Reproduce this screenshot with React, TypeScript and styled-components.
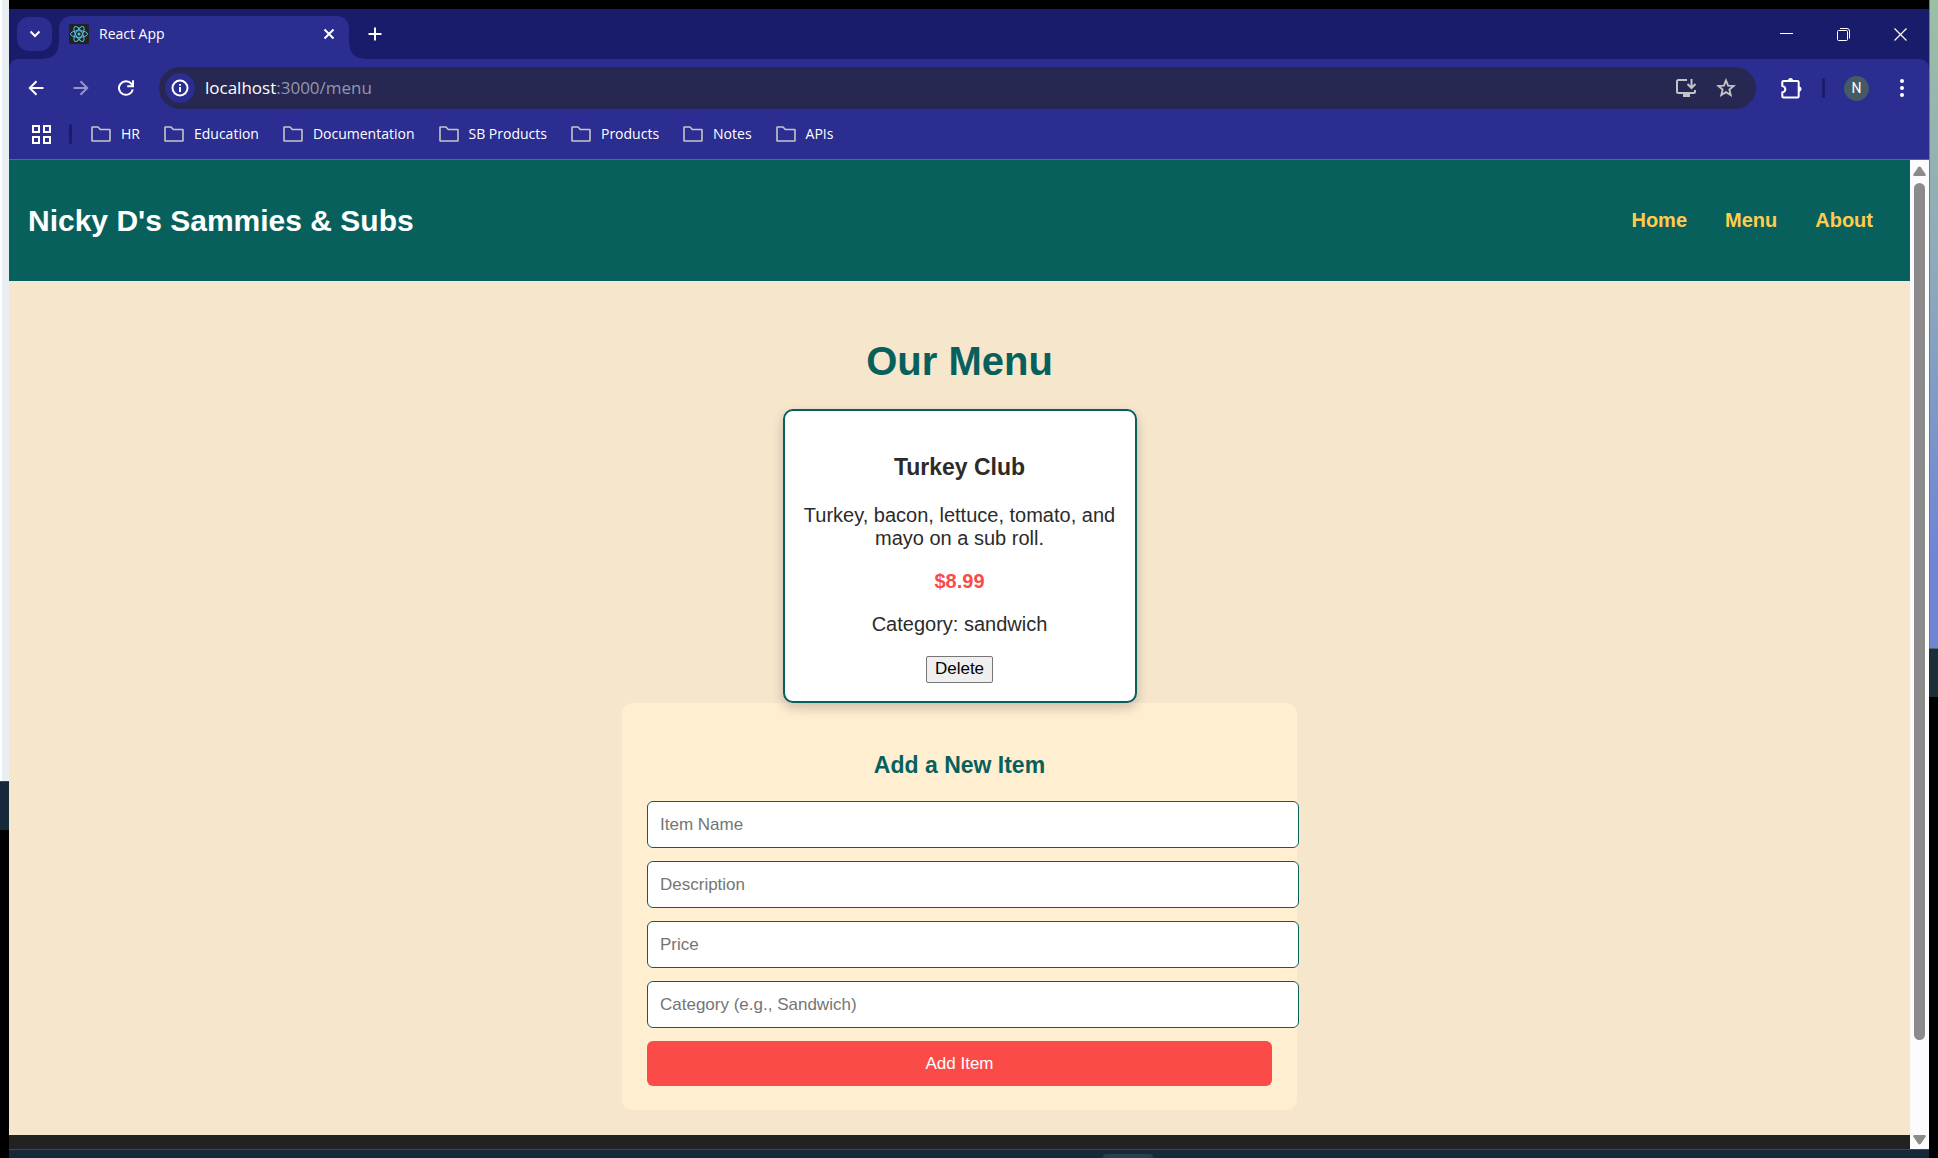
import React from "react";
import styled, { createGlobalStyle } from "styled-components";

const ui = `"Open Sans", "Noto Sans", sans-serif`;
const teal = "#08605d";
const frame = "#191b6b";
const bar = "#2b2d90";
const coral = "#fa4b48";

const GlobalStyle = createGlobalStyle`
  * { box-sizing: border-box; }
  body { margin: 0; background: #000; font-family: "Liberation Sans", Arial, sans-serif; font-size: 20px; line-height: 23px; color: #2b2b2b; }
  button, input { font-family: inherit; }
`;

const Desktop = styled.div`
  display: grid;
  grid-template-columns: 9px minmax(0, 1fr) 9px;
  min-height: 100vh;
`;

const Edge = styled.div`
  display: flex;
  flex-direction: column;
`;

const EdgeBlock = styled.div<{ $grow: number; $fill: string; $line?: string }>`
  flex: ${(p) => p.$grow} 1 0;
  background: ${(p) => p.$fill};
  border-top: ${(p) => (p.$line ? `1px solid ${p.$line}` : "none")};
`;

const Window = styled.div`
  display: flex;
  flex-direction: column;
  padding-top: 9px;
`;

const TabStrip = styled.div`
  display: flex;
  align-items: flex-start;
  height: 50px;
  padding: 8px 0 0 8px;
  background: ${frame};
`;

const PlainButton = styled.button`
  display: flex;
  align-items: center;
  justify-content: center;
  padding: 0;
  border: 0;
  background: none;
  color: #fff;
`;

const TabSearch = styled(PlainButton)`
  width: 35px;
  height: 34px;
  margin-right: 7px;
  border-radius: 12px;
  background: ${bar};
`;

const Tab = styled.div`
  position: relative;
  display: flex;
  align-items: center;
  width: 290px;
  height: 43px;
  margin-top: -1px;
  padding: 0 10px 7px;
  border-radius: 12px 12px 0 0;
  background: ${bar};
  color: #fff;
  font: 14px/20px ${ui};

  &::before,
  &::after {
    content: "";
    position: absolute;
    bottom: 0;
    width: 14px;
    height: 14px;
  }
  &::before {
    right: 100%;
    background: radial-gradient(circle at 0 0, transparent 13px, ${bar} 14px);
  }
  &::after {
    left: 100%;
    background: radial-gradient(circle at 100% 0, transparent 13px, ${bar} 14px);
  }
`;

const TabTitle = styled.span`
  flex: 1;
  padding-left: 10px;
`;

const TabClose = styled(PlainButton)`
  width: 20px;
  height: 34px;
`;

const NewTab = styled(PlainButton)`
  width: 34px;
  height: 34px;
  margin-left: 9px;
`;

const WindowControls = styled.div`
  display: flex;
  margin-left: auto;
`;

const WindowControl = styled(PlainButton)`
  width: 57px;
  height: 34px;
`;

const ToolbarBack = styled.div`
  background: ${frame};
`;

const Toolbar = styled.div`
  display: flex;
  align-items: center;
  height: 58px;
  padding: 0 5px 0 4px;
  border-radius: 9px 9px 0 0;
  background: ${bar};
`;

const ToolButton = styled(PlainButton)<{ $faded?: boolean }>`
  width: 45px;
  height: 42px;
  opacity: ${(p) => (p.$faded ? 0.5 : 1)};
`;

const AddressBar = styled.div`
  display: flex;
  flex: 1;
  align-items: center;
  height: 42px;
  margin: 0 12px 0 11px;
  padding: 0 10px 0 6px;
  border-radius: 21px;
  background: #262852;
  color: #9496ad;
  font: 17px/24px ${ui};
`;

const SiteInfo = styled(PlainButton)`
  width: 30px;
  height: 30px;
  margin-right: 10px;
  border-radius: 50%;
  background: ${bar};
`;

const Url = styled.div`
  flex: 1;
`;

const Host = styled.span`
  color: #fff;
`;

const AddressAction = styled(PlainButton)`
  width: 40px;
  height: 40px;
  color: #c4c4c6;
`;

const Divider = styled.div`
  width: 3px;
  height: 20px;
  border-radius: 2px;
  background: ${frame};
`;

const ToolDivider = styled(Divider)`
  margin: 0 9px;
`;

const Avatar = styled.span`
  width: 25px;
  height: 25px;
  border-radius: 50%;
  background: #455a64;
  text-align: center;
  font: 14px/25px Roboto, sans-serif;
`;

const Bookmarks = styled.nav`
  display: flex;
  align-items: center;
  gap: 24px;
  height: 43px;
  padding: 0 23px 8px;
  border-bottom: 1px solid #5a5cae;
  background: ${bar};
`;

const BookmarkLead = styled.div`
  display: flex;
  align-items: center;
  gap: 18px;
  margin-right: -5px;
`;

const Bookmark = styled.a`
  display: flex;
  align-items: center;
  gap: 10px;
  color: #fff;
  font: 14px/20px ${ui};
  text-decoration: none;

  svg {
    color: #c6c6c6;
  }
`;

const Viewport = styled.div`
  display: flex;
`;

const Site = styled.div`
  flex: 1;
  min-width: 0;
  background: #f5e6cc;
`;

const SiteHeader = styled.header`
  display: flex;
  align-items: center;
  justify-content: space-between;
  height: 121px;
  padding: 0 37px 0 19px;
  background: ${teal};
`;

const Brand = styled.h1`
  margin: 0;
  color: #fff;
  font-size: 30px;
  line-height: 35px;
`;

const SiteNav = styled.nav`
  display: flex;
  gap: 38px;
`;

const NavLink = styled.a`
  color: #ffcc4d;
  font-weight: 700;
  text-decoration: none;
`;

const Menu = styled.main`
  display: flex;
  flex-direction: column;
  align-items: center;
  padding: 57px 25px 25px;
  text-align: center;
`;

const PageTitle = styled.h2`
  margin: 0 0 25px;
  color: ${teal};
  font-size: 40px;
  line-height: 46px;
`;

const Card = styled.article`
  position: relative;
  width: 100%;
  max-width: 354px;
  padding: 43px 18px 18px;
  border: 2px solid ${teal};
  border-radius: 10px;
  background: #fff;
  box-shadow: 0 5px 12px rgba(0, 0, 0, 0.2);
`;

const CardTitle = styled.h3`
  margin: 0 0 23px;
  font-size: 23px;
  line-height: 27px;
`;

const CardText = styled.p`
  margin: 0 0 20px;
`;

const Price = styled(CardText)`
  color: ${coral};
  font-weight: 700;
`;

const DeleteButton = styled.button`
  display: block;
  height: 27px;
  margin: 0 auto;
  padding: 0 8px 2px;
  border: 1px solid #767676;
  border-radius: 2px;
  background: #efefef;
  color: #000;
  font-size: 17px;
  line-height: 20px;
`;

const ItemForm = styled.form`
  width: 100%;
  max-width: 675px;
  padding: 49px 25px 24px;
  border-radius: 10px;
  background: #ffeed0;
`;

const FormTitle = styled.h3`
  margin: 0 0 22px;
  color: ${teal};
  font-size: 23px;
  line-height: 27px;
`;

const Field = styled.input`
  box-sizing: content-box;
  display: block;
  width: 100%;
  height: 19px;
  margin: 0 0 13px;
  padding: 14px 13px 14px 12px;
  padding-block: 13px;
  border: 1px solid ${teal};
  border-radius: 6px;
  background: #fff;
  color: #2b2b2b;
  font-size: 17px;

  &::placeholder {
    color: #757575;
  }
`;

const SubmitButton = styled.button`
  display: block;
  width: 100%;
  height: 45px;
  padding: 0;
  border: 0;
  border-radius: 6px;
  background: ${coral};
  color: #fff;
  font-size: 17px;
`;

const SiteFooter = styled.footer`
  height: 14px;
  background: #222;
`;

const Scrollbar = styled.div`
  display: flex;
  flex-direction: column;
  align-items: center;
  width: 19px;
  padding: 6px 0 4px;
  background: #fcfcfc;
  color: #8b8b8b;
`;

const Thumb = styled.div`
  flex: 855 1 0;
  width: 11px;
  margin-top: 7px;
  border-radius: 6px;
  background: #8b8b8b;
`;

const ThumbRest = styled.div`
  flex: 95 1 0;
`;

const Taskbar = styled.div`
  display: flex;
  flex: 1;
  align-items: flex-end;
  min-height: 9px;
  border-top: 1px solid #3b4954;
  background: #15293b;
`;

const TaskbarApp = styled.div`
  width: 50px;
  height: 4px;
  margin-left: 57%;
  border-radius: 4px 4px 0 0;
  background: #2c3e4e;
`;

const Line = ({ size, children, width = 2 }: { size: number; children: React.ReactNode; width?: number }) => (
  <svg width={size} height={size} viewBox={`0 0 ${size} ${size}`} fill="none" stroke="currentColor" strokeWidth={width} aria-hidden="true">
    {children}
  </svg>
);

const ReactMark = () => (
  <svg width="20" height="20" viewBox="0 0 20 20" fill="none" stroke="#53c1de" strokeWidth="1" aria-hidden="true">
    <rect width="20" height="20" rx="2" fill="#222" stroke="none" />
    <ellipse cx="10" cy="10" rx="8.5" ry="3.3" />
    <ellipse cx="10" cy="10" rx="8.5" ry="3.3" transform="rotate(60 10 10)" />
    <ellipse cx="10" cy="10" rx="8.5" ry="3.3" transform="rotate(120 10 10)" />
    <circle cx="10" cy="10" r="1.5" fill="#53c1de" stroke="none" />
  </svg>
);

const Folder = () => (
  <svg width="20" height="16" viewBox="0 0 20 16" fill="none" stroke="currentColor" strokeWidth="1.6" strokeLinejoin="round" aria-hidden="true">
    <path d="M1 1.6Q1 1 1.6 1H7l2.3 2.5h9.1q.6 0 .6.6v10.3q0 .6-.6.6H1.6q-.6 0-.6-.6Z" />
  </svg>
);

const Arrow = ({ down }: { down?: boolean }) => (
  <svg width="13" height="10" viewBox="0 0 13 10" fill="currentColor" aria-hidden="true">
    <path d={down ? "M1 0h11q1 .2.8 1.4L7.8 8.8q-1.3 1.2-2.6 0L.2 1.4Q0 .2 1 0Z" : "M1 10h11q1-.2.8-1.4L7.8 1.2q-1.3-1.2-2.6 0L.2 8.6Q0 9.8 1 10Z"} />
  </svg>
);

const folders = ["HR", "Education", "Documentation", "SB Products", "Products", "Notes", "APIs"];
const pages = ["Home", "Menu", "About"];
const fields = ["Item Name", "Description", "Price", "Category (e.g., Sandwich)"];

const BrowserChrome = () => (
  <>
    <TabStrip>
      <TabSearch aria-label="Search tabs">
        <Line size={12}><path d="M1.5 3.5 6 8l4.500-4.500" /></Line>
      </TabSearch>
      <Tab>
        <ReactMark />
        <TabTitle>React App</TabTitle>
        <TabClose aria-label="Close tab">
          <Line size={12}><path d="m1.500 1.500 9 9m0-9-9 9" /></Line>
        </TabClose>
      </Tab>
      <NewTab aria-label="New tab">
        <Line size={14}><path d="M7 .5v13M.5 7h13" /></Line>
      </NewTab>
      <WindowControls>
        <WindowControl aria-label="Minimize">
          <Line size={13} width={1}><path d="M0 5.500h13" /></Line>
        </WindowControl>
        <WindowControl aria-label="Restore">
          <Line size={13} width={1}>
            <rect x="0.5" y="2.5" width="10" height="10" rx="1" />
            <path d="M3 .5h7q2.500 0 2.500 2.500v7.500" />
          </Line>
        </WindowControl>
        <WindowControl aria-label="Close">
          <Line size={13} width={1.2}><path d="m.5.5 12 12m0-12-12 12" /></Line>
        </WindowControl>
      </WindowControls>
    </TabStrip>
    <ToolbarBack>
      <Toolbar>
        <ToolButton aria-label="Back">
          <Line size={16}><path d="M15.500 8H2M8.500 1.300 1.800 8l6.700 6.700" /></Line>
        </ToolButton>
        <ToolButton aria-label="Forward" $faded>
          <Line size={16}><path d="M.5 8H14M7.500 1.300 14.200 8l-6.700 6.700" /></Line>
        </ToolButton>
        <ToolButton aria-label="Reload">
          <Line size={16}><path d="M14.800 9.500A7 6.700 0 1 1 13.500 3.900L15 5.500M15 .3v5.900H9.200" /></Line>
        </ToolButton>
        <AddressBar>
          <SiteInfo aria-label="Site information">
            <Line size={18}>
              <circle cx="9" cy="9" r="7.5" />
              <path d="M9 8v5M9 5v1.800" />
            </Line>
          </SiteInfo>
          <Url><Host>localhost</Host>:3000/menu</Url>
          <AddressAction aria-label="Install app">
            <Line size={22}>
              <path d="M12 3H3.500Q2 3 2 4.500v10Q2 16 3.500 16h15q1.500 0 1.500-1.500V13M16.500 2v8M12.500 7l4 4 4-4" />
              <path d="M8 18.500h7" strokeWidth="3" />
            </Line>
          </AddressAction>
          <AddressAction aria-label="Bookmark this page">
            <Line size={20} width={1.9}>
              <path d="m10 2.500 2.100 5.100 5.500.4-4.200 3.600 1.300 5.400-4.700-2.900L5.300 17l1.300-5.400L2.400 8l5.500-.4Z" />
            </Line>
          </AddressAction>
        </AddressBar>
        <ToolButton aria-label="Extensions">
          <Line size={22}>
            <path d="M3.500 4h14q1.200 0 1.200 1.200v14q0 1.200-1.200 1.200h-14q-1.200 0-1.200-1.200V15.500q3-.8 3-3.300t-3-3.300V5.200Q2.300 4 3.500 4Z" />
            <path d="M8 3.500a2.500 2.500 0 0 1 5 0M19 9.500a2.500 2.500 0 0 1 0 5" fill="currentColor" stroke="none" />
          </Line>
        </ToolButton>
        <ToolDivider />
        <ToolButton aria-label="Profile"><Avatar>N</Avatar></ToolButton>
        <ToolButton aria-label="More">
          <svg width="4" height="18" viewBox="0 0 4 18" fill="currentColor" aria-hidden="true">
            <circle cx="2" cy="2" r="2" />
            <circle cx="2" cy="9" r="2" />
            <circle cx="2" cy="16" r="2" />
          </svg>
        </ToolButton>
      </Toolbar>
    </ToolbarBack>
    <Bookmarks aria-label="Bookmarks">
      <BookmarkLead>
        <PlainButton aria-label="Apps">
          <Line size={19}>
            <path d="M1 1h6v6H1ZM12 1h6v6h-6ZM1 12h6v6H1ZM12 12h6v6h-6Z" />
          </Line>
        </PlainButton>
        <Divider />
      </BookmarkLead>
      {folders.map((name) => (
        <Bookmark key={name} href="#"><Folder />{name}</Bookmark>
      ))}
    </Bookmarks>
  </>
);

const App = () => (
  <>
    <GlobalStyle />
    <Desktop>
      <Edge>
        <EdgeBlock $grow={782} $fill="linear-gradient(90deg, #fff 2px, #e8eef2 2px)" />
        <EdgeBlock $grow={48} $fill="#15293b" $line="#3b4954" />
        <EdgeBlock $grow={328} $fill="#000" />
      </Edge>
      <Window>
        <BrowserChrome />
        <Viewport>
          <Site>
            <SiteHeader>
              <Brand>Nicky D's Sammies &amp; Subs</Brand>
              <SiteNav>
                {pages.map((page) => (
                  <NavLink key={page} href="#">{page}</NavLink>
                ))}
              </SiteNav>
            </SiteHeader>
            <Menu>
              <PageTitle>Our Menu</PageTitle>
              <Card>
                <CardTitle>Turkey Club</CardTitle>
                <CardText>Turkey, bacon, lettuce, tomato, and mayo on a sub roll.</CardText>
                <Price>$8.99</Price>
                <CardText>Category: sandwich</CardText>
                <DeleteButton>Delete</DeleteButton>
              </Card>
              <ItemForm onSubmit={(e) => e.preventDefault()}>
                <FormTitle>Add a New Item</FormTitle>
                {fields.map((label) => (
                  <Field key={label} type="text" placeholder={label} aria-label={label} />
                ))}
                <SubmitButton type="submit">Add Item</SubmitButton>
              </ItemForm>
            </Menu>
            <SiteFooter />
          </Site>
          <Scrollbar>
            <Arrow />
            <Thumb />
            <ThumbRest />
            <Arrow down />
          </Scrollbar>
        </Viewport>
        <Taskbar><TaskbarApp /></Taskbar>
      </Window>
      <Edge>
        <EdgeBlock $grow={649} $fill="linear-gradient(90deg, #77777f 1px, transparent 1px), linear-gradient(#9bbfa4, #8ba8bd 45%, #6f86d4 85%)" />
        <EdgeBlock $grow={48} $fill="#1c2e38" $line="#55616b" />
        <EdgeBlock $grow={461} $fill="#000" />
      </Edge>
    </Desktop>
  </>
);

export default App;
